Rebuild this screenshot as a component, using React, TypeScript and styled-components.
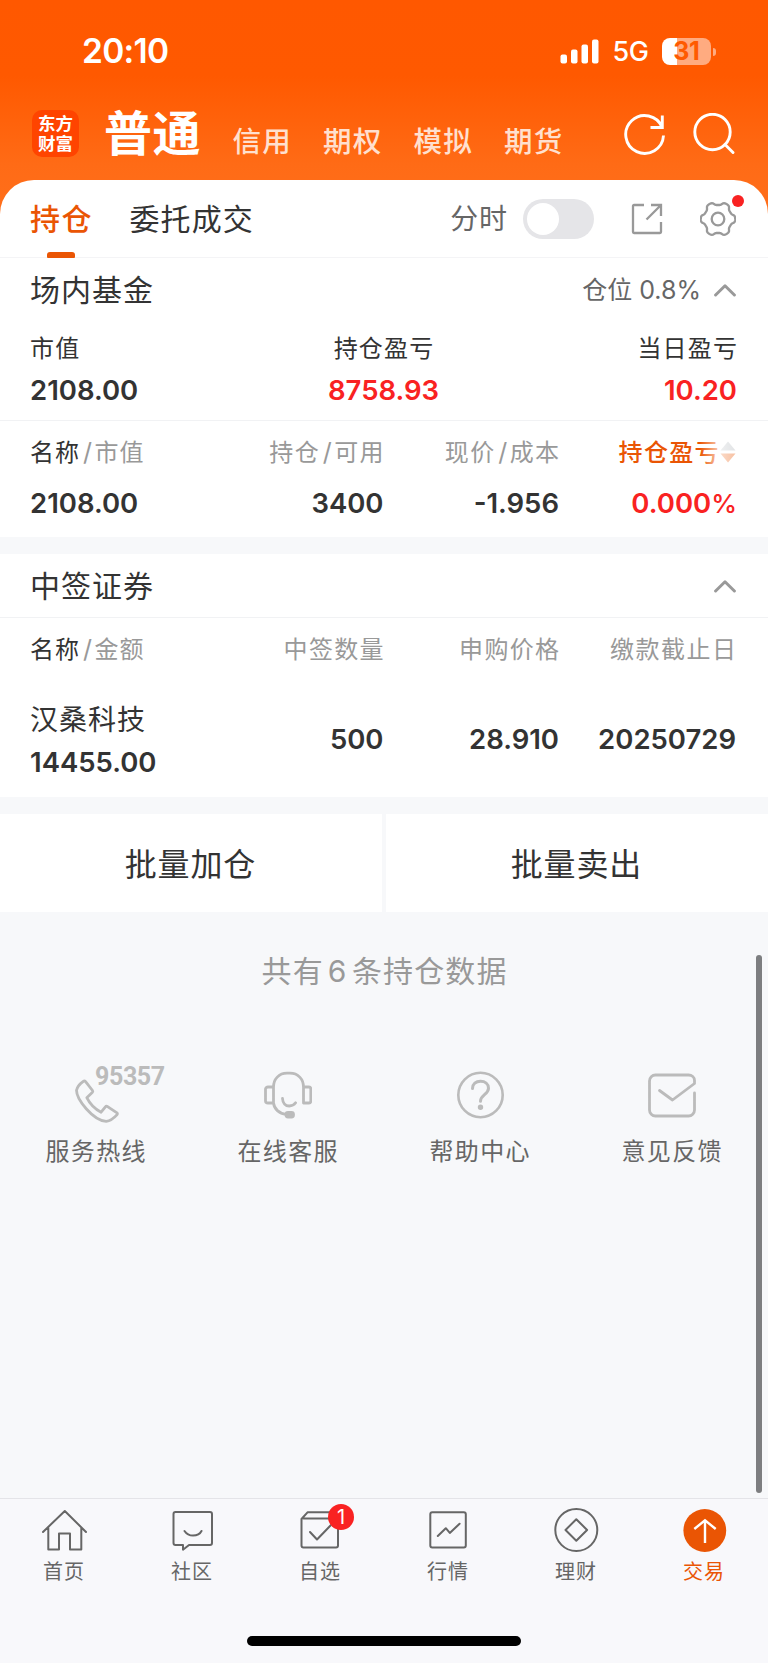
import React from "react";
import styled, { createGlobalStyle } from "styled-components";

const ORANGE = "#ea5504";
const RED = "#f92222";
const INK = "#333333";
const MUTED = "#999999";
const DIM = "#666666";

const GlobalStyle = createGlobalStyle`
  * { box-sizing: border-box; }
  body {
    margin: 0;
    background: #f7f8fa;
    font-family: Inter, "Noto Sans CJK SC", sans-serif;
    color: ${INK};
  }
`;

const Screen = styled.div`
  width: 768px;
  height: 1663px;
  display: flex;
  flex-direction: column;
  overflow: hidden;
  background: #f7f8fa;
`;

interface TextProps {
  $size: number;
  $color?: string;
  $weight?: number;
  $gap?: number;
}

const Text = styled.span<TextProps>`
  display: block;
  padding-top: 2px;
  font-size: ${(p) => p.$size}px;
  line-height: 1.25;
  font-weight: ${(p) => p.$weight ?? 400};
  color: ${(p) => p.$color ?? "inherit"};
  letter-spacing: ${(p) => p.$gap ?? 0}px;
  margin-right: ${(p) => -(p.$gap ?? 0)}px;
  white-space: nowrap;
`;

const Amount = styled(Text).attrs({ $size: 27.5, $weight: 600 })`
  padding-top: 0;
  letter-spacing: 0;
  margin-right: 0;
`;

const Percent = styled.span`
  font-size: 26px;
  font-weight: 500;
  letter-spacing: -1px;
`;

const Hero = styled.header`
  height: 216px;
  margin-bottom: -36px;
  flex: none;
  background: linear-gradient(#ff5800 0, #ff5900 76px, #ff6b16 165px, #ff6f1b 216px);
  color: #fff;
`;

const StatusBar = styled.div`
  height: 102px;
  padding: 0 52px 0 82px;
  display: flex;
  align-items: center;
  justify-content: space-between;
`;

const StatusIcons = styled.div`
  display: flex;
  align-items: center;
  gap: 13px;
`;

const Battery = styled.div`
  position: relative;
  width: 49px;
  height: 27px;
  margin-right: 5px;
  border-radius: 8px;
  display: flex;
  align-items: center;
  justify-content: center;
  background: linear-gradient(90deg, #fff 15px, #ffab80 15px);
  &::after {
    content: "";
    position: absolute;
    right: -5px;
    top: 10px;
    width: 3px;
    height: 8px;
    border-radius: 0 3px 3px 0;
    background: #ffab80;
  }
`;

const AccountNav = styled.nav`
  height: 78px;
  padding: 0 33px 14px 32px;
  display: flex;
  align-items: center;
`;

const Logo = styled.div`
  width: 47px;
  height: 47px;
  margin-bottom: 1px;
  border-radius: 10px;
  background: #ff4400;
  display: flex;
  flex-direction: column;
  align-items: center;
  justify-content: center;
  font-size: 17.5px;
  line-height: 19.5px;
  font-weight: 700;
`;

const ActiveAccount = styled(Text)`
  margin-left: 25px;
  padding-top: 0;
`;

const AccountLinks = styled.div`
  display: flex;
  gap: 32.2px;
  padding-top: 13px;
  margin-left: 32px;
  flex: 1;
`;

const NavActions = styled.div`
  display: flex;
  gap: 27px;
`;

const Panel = styled.section`
  flex: none;
  background: #fff;
`;

const HoldingsPanel = styled(Panel)`
  height: 357px;
  border-radius: 34px 34px 0 0;
`;

const TabsRow = styled.div`
  height: 78px;
  padding: 0 32px 0 30px;
  display: flex;
  align-items: center;
  border-bottom: 1px solid #f4f4f6;
`;

const Tab = styled.div<{ $active?: boolean }>`
  position: relative;
  height: 78px;
  margin-right: 38px;
  display: flex;
  align-items: center;
  color: ${(p) => (p.$active ? ORANGE : INK)};
  &::after {
    content: "";
    display: ${(p) => (p.$active ? "block" : "none")};
    position: absolute;
    left: 17px;
    bottom: 0;
    width: 28px;
    height: 6px;
    border-radius: 3px 3px 1px 1px;
    background: ${ORANGE};
  }
`;

const TabTools = styled.div`
  margin-left: auto;
  display: flex;
  align-items: center;
`;

const Switch = styled.div`
  width: 71px;
  height: 40px;
  margin: 0 37px 0 16px;
  padding: 4px;
  border-radius: 20px;
  background: #e5e5e8;
  &::before {
    content: "";
    display: block;
    width: 32px;
    height: 32px;
    border-radius: 50%;
    background: #fff;
  }
`;

const GearButton = styled.div`
  position: relative;
  margin-left: 37px;
  display: flex;
  &::after {
    content: "";
    position: absolute;
    left: 32px;
    top: -6px;
    width: 12px;
    height: 12px;
    border-radius: 50%;
    background: ${RED};
  }
`;

const SectionHead = styled.div<{ $height: number; $ruled?: boolean }>`
  height: ${(p) => p.$height}px;
  padding: 0 32px 0 30px;
  display: flex;
  align-items: center;
  justify-content: space-between;
  border-bottom: ${(p) => (p.$ruled ? "1px solid #f1f2f4" : "none")};
`;

const HeadAside = styled.div`
  display: flex;
  align-items: center;
  gap: 13px;
`;

const Metrics = styled.div`
  height: 99px;
  padding: 6px 31px 0 30px;
  display: grid;
  grid-template-columns: 1fr 1fr 1fr;
  border-bottom: 1px solid #f1f2f4;
`;

const Metric = styled.div<{ $align: string }>`
  display: flex;
  flex-direction: column;
  align-items: ${(p) => p.$align};
  & > * {
    padding-top: 0;
    line-height: 42px;
  }
  & > :last-child {
    line-height: 40px;
  }
`;

const TableRow = styled.div<{ $height: number }>`
  height: ${(p) => p.$height}px;
  padding: 0 32px 0 30px;
  display: grid;
  grid-template-columns: 178px 175.5px 175.5px 177px;
  align-items: center;
`;

const Cell = styled.div`
  position: relative;
  display: flex;
  align-items: center;
  justify-content: flex-end;
  &:first-child {
    justify-content: flex-start;
  }
`;

const Slash = styled(Text).attrs({ $size: 25, $color: MUTED })`
  margin: 0 2.5px 0 4px;
`;

const SortLabel = styled.div`
  position: relative;
  display: flex;
  align-items: center;
  gap: 1.5px;
  &::after {
    content: "";
    position: absolute;
    right: 0;
    top: 0;
    width: 36px;
    height: 100%;
    background: linear-gradient(90deg, rgba(255, 255, 255, 0), rgba(255, 255, 255, 0.72) 55%, rgba(255, 255, 255, 0.5));
  }
`;

const Stock = styled.div`
  display: flex;
  flex-direction: column;
  padding-top: 4px;
  & > * {
    padding-top: 0;
    line-height: 42px;
  }
`;

const AllotmentPanel = styled(Panel)`
  margin-top: 17px;
  height: 243px;
`;

const BatchActions = styled.div`
  flex: none;
  margin-top: 17px;
  height: 98px;
  display: flex;
  gap: 4px;
`;

const BatchButton = styled.div`
  flex: 1;
  background: #fff;
  display: flex;
  align-items: center;
  justify-content: center;
  padding: 1px 2px 0 0;
`;

const Rest = styled.main`
  position: relative;
  flex: 1;
  padding-top: 39px;
  display: flex;
  flex-direction: column;
  align-items: center;
`;

const Count = styled.span`
  margin: 0 4.5px 0 4px;
`;

const Scrollbar = styled.div`
  position: absolute;
  right: 6px;
  top: 43px;
  width: 6px;
  height: 538px;
  border-radius: 3px;
  background: #7d7e80;
`;

const HelpRow = styled.div`
  width: 100%;
  margin-top: 76px;
  padding-right: 1px;
  display: grid;
  grid-template-columns: repeat(4, 192px);
`;

const HelpItem = styled.div`
  position: relative;
  display: flex;
  flex-direction: column;
  align-items: center;
  gap: 12px;
  padding-right: 1px;
`;

const HotlineNumber = styled.span`
  position: absolute;
  left: 95px;
  top: -4px;
  font: 700 25px/28px Roboto, sans-serif;
  letter-spacing: -0.4px;
  color: #bbb;
`;

const BottomBar = styled.footer`
  flex: none;
  height: 165px;
  border-top: 1px solid #e4e4e8;
  background: #f8f8fb;
  display: flex;
  flex-direction: column;
  align-items: center;
  justify-content: space-between;
  padding-bottom: 17px;
`;

const BottomTabs = styled.nav`
  width: 100%;
  display: grid;
  grid-template-columns: repeat(6, 1fr);
`;

const BottomTab = styled.div`
  position: relative;
  display: flex;
  flex-direction: column;
  align-items: center;
  padding: 8px 1px 0 0;
  gap: 3px;
`;

const Badge = styled.span`
  position: absolute;
  left: 72px;
  top: 5px;
  width: 26px;
  height: 26px;
  border-radius: 50%;
  background: ${RED};
  color: #fff;
  font-size: 20px;
  line-height: 26px;
  text-align: center;
`;

const HomeIndicator = styled.div`
  width: 274px;
  height: 10px;
  border-radius: 5px;
  background: #000;
`;

interface IconProps {
  w: number;
  h: number;
  color?: string;
  stroke?: number;
  children: React.ReactNode;
}

const Icon = ({ w, h, color = DIM, stroke = 2, children }: IconProps) => (
  <svg
    width={w}
    height={h}
    viewBox={`0 0 ${w} ${h}`}
    fill="none"
    stroke={color}
    strokeWidth={stroke}
    strokeLinejoin="round"
    strokeLinecap="round"
  >
    {children}
  </svg>
);

/* Six-lobed outline of the settings gear, centred on (18, 18). */
const gearPath = (() => {
  const pts: string[] = [];
  for (let d = 0; d < 360; d += 3) {
    const t = (d * Math.PI) / 180;
    const r = 15.6 + (1.6 * Math.tanh(1.8 * Math.cos(6 * t))) / Math.tanh(1.8);
    pts.push(`${(18 + r * Math.cos(t)).toFixed(2)} ${(18 + r * Math.sin(t)).toFixed(2)}`);
  }
  return `M${pts.join("L")}Z`;
})();

const ChevronUp = () => (
  <Icon w={22} h={14} color={MUTED} stroke={3}>
    <path d="M1.600 12 11 2.800l9.400 9.200" />
  </Icon>
);

const accounts = ["信用", "期权", "模拟", "期货"];

const helpItems = [
  {
    label: "服务热线",
    number: "95357",
    icon: (
      <Icon w={48} h={56} color="#bbb" stroke={2.8}>
        <path d="M11.300 14.300c-3.400 2.400-6.100 5.500-6.800 9 0 9.200 16.600 30.400 29.700 31.100 3.500-.4 8.100-3.700 10.900-6.800.5-.8.3-1.400-.5-2l-9-5.900c-.9-.6-1.600-.5-2.200.2l-4.300 5.300C24 42.700 18 37.200 14.800 30.700l5.400-5.100c.7-.7.8-1.300.3-2.100l-6.900-8.800c-.7-.8-1.400-1-2.300-.4z" />
      </Icon>
    ),
  },
  {
    label: "在线客服",
    icon: (
      <Icon w={48} h={56} color="#bbb" stroke={2.8}>
        <path d="M9.500 36V20C9.500 12 15 6.200 23 6.200h3c8 0 13.500 5.800 13.500 13.800v16H45c1 0 1.800-1 1.800-2V22c0-1.200-.8-2-1.800-2h-5.500M9.500 20H4c-1.400 0-2.500.8-2.500 2v12c0 1.200 1.100 2 2.500 2h5.500c.8 6 5.500 10.600 12.500 11.300M18.500 31.500c.2 4.500 3 7.500 6.700 7.500 2.800 0 5-1.200 6.400-3.200" />
        <rect x="22" y="45.500" width="7.500" height="4.500" rx="2" fill="#bbb" />
      </Icon>
    ),
  },
  {
    label: "帮助中心",
    icon: (
      <Icon w={48} h={56} color="#bbb" stroke={2.6}>
        <circle cx="24.500" cy="28" r="22.200" />
        <path d="M16.500 21.500c0-4.600 3.400-7.300 8-7.300 4.500 0 8 2.600 8 7 0 6.200-8 6.800-8 13" strokeWidth="3" />
        <circle cx="24.500" cy="40.200" r="1.400" fill="#bbb" />
      </Icon>
    ),
  },
  {
    label: "意见反馈",
    icon: (
      <Icon w={48} h={56} color="#bbb" stroke={2.8}>
        <path d="M46.500 26v17c0 3.300-2.700 6-6 6h-33c-3.300 0-6-2.700-6-6V14c0-3.300 2.700-6 6-6h33c3.300 0 6 2.300 6 5.500v3L24.500 33 11.500 23.500" />
      </Icon>
    ),
  },
];

const bottomTabs = [
  {
    label: "首页",
    icon: (
      <Icon w={48} h={48}>
        <path d="M3 25 24.800 4 46 25M8.300 21v21.500h10.700V26.500h11v16h11.300V21" />
      </Icon>
    ),
  },
  {
    label: "社区",
    icon: (
      <Icon w={48} h={48}>
        <path d="M7.500 5h34.500c1.200 0 2 .8 2 2v29c0 1.200-.8 2-2 2H21l-6 4.700V38H7.500c-1.200 0-2-.8-2-2V7c0-1.200.8-2 2-2zM16.500 24c2 3 5 4.600 8.500 4.600S32 27 33.500 24" />
      </Icon>
    ),
  },
  {
    label: "自选",
    badge: "1",
    icon: (
      <Icon w={48} h={48}>
        <path d="M7.500 11.500H40.500c1 0 1.500.8 1.500 1.500v25.500c0 1.200-.8 2-2 2H7.500c-1.200 0-2-.8-2-2V12L11.500 5.300H40l2 6.200M14 25l7 7.500 14-14.500" />
      </Icon>
    ),
  },
  {
    label: "行情",
    icon: (
      <Icon w={48} h={48}>
        <rect x="6.300" y="5.300" width="35.500" height="35.300" rx="2" />
        <path d="m13.800 29 8-7.800 4 4.700 9.800-9.200" />
      </Icon>
    ),
  },
  {
    label: "理财",
    icon: (
      <Icon w={48} h={48}>
        <circle cx="24.300" cy="23" r="21" />
        <path d="M24.300 12.200 35.100 23 24.300 33.800 13.500 23z" />
      </Icon>
    ),
  },
  {
    label: "交易",
    active: true,
    icon: (
      <Icon w={48} h={48} color="#fff" stroke={2.4}>
        <circle cx="24.800" cy="23.500" r="21.400" fill={ORANGE} stroke="none" />
        <path d="M25 36V13M14.300 22l10.700-8.700L35.700 22" strokeLinecap="butt" strokeLinejoin="miter" />
      </Icon>
    ),
  },
];

export default function App() {
  return (
    <Screen>
      <GlobalStyle />
      <Hero>
        <StatusBar>
          <Text $size={33.5} $weight={600} $gap={-0.7}>20:10</Text>
          <StatusIcons>
            <Icon w={39} h={25} color="none">
              <g fill="#fff">
                <rect x="0.500" y="15.500" width="6.500" height="9" rx="2" />
                <rect x="11" y="10.500" width="6.500" height="14" rx="2" />
                <rect x="21.500" y="5.500" width="6.500" height="19" rx="2" />
                <rect x="32" y="0.500" width="6.500" height="24" rx="2" />
              </g>
            </Icon>
            <Text $size={27} $weight={500} $gap={-0.3}>5G</Text>
            <Battery>
              <Text $size={25} $weight={700} $color="#ff5a00" $gap={-0.6}>31</Text>
            </Battery>
          </StatusIcons>
        </StatusBar>
        <AccountNav>
          <Logo>
            <span>东方</span>
            <span>财富</span>
          </Logo>
          <ActiveAccount $size={48} $weight={700} $gap={0.5}>普通</ActiveAccount>
          <AccountLinks>
            {accounts.map((a) => (
              <Text key={a} $size={28.5} $weight={500} $gap={1.3} $color="#ffe0cf">{a}</Text>
            ))}
          </AccountLinks>
          <NavActions>
            <Icon w={42} h={42} color="#fff" stroke={2.9}>
              <path d="M39.500 22.500A18.900 18.900 0 1 1 38.200 14.500M38.300 2.500v12H26.500" strokeLinecap="butt" strokeLinejoin="miter" />
            </Icon>
            <Icon w={42} h={42} color="#fff" stroke={2.900}>
              <circle cx="19.500" cy="19" r="17.700" />
              <path d="m32 31.500 8 8" />
            </Icon>
          </NavActions>
        </AccountNav>
      </Hero>

      <HoldingsPanel>
        <TabsRow>
          <Tab $active>
            <Text $size={30} $weight={500} $gap={1.5}>持仓</Text>
          </Tab>
          <Tab>
            <Text $size={30} $gap={1.1}>委托成交</Text>
          </Tab>
          <TabTools>
            <Text $size={28} $color={DIM} $gap={0.8}>分时</Text>
            <Switch />
            <Icon w={32} h={32} color={MUTED} stroke={2.3}>
              <path d="M13 2H3c-.6 0-1 .4-1 1v26c0 .6.4 1 1 1h26c.6 0 1-.4 1-1V19M20 2h10v11M30 2 15.500 16.500" strokeLinecap="butt" strokeLinejoin="miter" />
            </Icon>
            <GearButton>
              <Icon w={36} h={36} color={MUTED} stroke={2.3}>
                <path d={gearPath} />
                <circle cx="18" cy="18" r="6.300" />
              </Icon>
            </GearButton>
          </TabTools>
        </TabsRow>

        <SectionHead $height={64}>
          <Text $size={30} $gap={1}>场内基金</Text>
          <HeadAside>
            <Text $size={25} $color={DIM}>仓位 0.8%</Text>
            <ChevronUp />
          </HeadAside>
        </SectionHead>

        <Metrics>
          <Metric $align="flex-start">
            <Text $size={24} $gap={1.2}>市值</Text>
            <Amount>2108.00</Amount>
          </Metric>
          <Metric $align="center">
            <Text $size={24} $gap={1.2}>持仓盈亏</Text>
            <Amount $color={RED}>8758.93</Amount>
          </Metric>
          <Metric $align="flex-end">
            <Text $size={24} $gap={1.2}>当日盈亏</Text>
            <Amount $color={RED}>10.20</Amount>
          </Metric>
        </Metrics>

        <TableRow $height={62}>
          <Cell>
            <Text $size={24} $gap={1}>名称</Text>
            <Slash>/</Slash>
            <Text $size={24} $gap={1} $color={MUTED}>市值</Text>
          </Cell>
          <Cell>
            <Text $size={24} $gap={1.3} $color={MUTED}>持仓</Text>
            <Slash>/</Slash>
            <Text $size={24} $gap={1.3} $color={MUTED}>可用</Text>
          </Cell>
          <Cell>
            <Text $size={24} $gap={1.3} $color={MUTED}>现价</Text>
            <Slash>/</Slash>
            <Text $size={24} $gap={1.3} $color={MUTED}>成本</Text>
          </Cell>
          <Cell>
            <SortLabel>
              <Text $size={24} $gap={1.3} $weight={500} $color={ORANGE}>持仓盈亏</Text>
              <Icon w={16} h={22} color="none">
                <path d="M8 .5 15.500 9.500H.5z" fill="#c4c8cc" />
                <path d="M8 21.500 15.500 12.500H.5z" fill="#f08040" />
              </Icon>
            </SortLabel>
          </Cell>
        </TableRow>
        <TableRow $height={40}>
          <Cell><Amount>2108.00</Amount></Cell>
          <Cell><Amount>3400</Amount></Cell>
          <Cell><Amount>-1.956</Amount></Cell>
          <Cell><Amount $color={RED}>0.000<Percent>%</Percent></Amount></Cell>
        </TableRow>
      </HoldingsPanel>

      <AllotmentPanel>
        <SectionHead $height={64} $ruled>
          <Text $size={30} $gap={1}>中签证券</Text>
          <ChevronUp />
        </SectionHead>
        <TableRow $height={62}>
          <Cell>
            <Text $size={24} $gap={1}>名称</Text>
            <Slash>/</Slash>
            <Text $size={24} $gap={1} $color={MUTED}>金额</Text>
          </Cell>
          <Cell><Text $size={24} $gap={1.3} $color={MUTED}>中签数量</Text></Cell>
          <Cell><Text $size={24} $gap={1.3} $color={MUTED}>申购价格</Text></Cell>
          <Cell><Text $size={24} $gap={1.5} $color={MUTED}>缴款截止日</Text></Cell>
        </TableRow>
        <TableRow $height={118}>
          <Cell>
            <Stock>
              <Text $size={28} $gap={1}>汉桑科技</Text>
              <Amount>14455.00</Amount>
            </Stock>
          </Cell>
          <Cell><Amount>500</Amount></Cell>
          <Cell><Amount>28.910</Amount></Cell>
          <Cell><Amount>20250729</Amount></Cell>
        </TableRow>
      </AllotmentPanel>

      <BatchActions>
        <BatchButton><Text $size={32} $gap={0.9}>批量加仓</Text></BatchButton>
        <BatchButton><Text $size={32} $gap={0.9}>批量卖出</Text></BatchButton>
      </BatchActions>

      <Rest>
        <Text $size={30} $gap={1.1} $color={MUTED}>共有<Count>6</Count>条持仓数据</Text>
        <HelpRow>
          {helpItems.map((item) => (
            <HelpItem key={item.label}>
              {item.icon}
              {item.number && <HotlineNumber>{item.number}</HotlineNumber>}
              <Text $size={24} $gap={1.3} $color={DIM}>{item.label}</Text>
            </HelpItem>
          ))}
        </HelpRow>
        <Scrollbar />
      </Rest>

      <BottomBar>
        <BottomTabs>
          {bottomTabs.map((tab) => (
            <BottomTab key={tab.label}>
              {tab.icon}
              {tab.badge && <Badge>{tab.badge}</Badge>}
              <Text $size={20} $gap={1} $color={tab.active ? ORANGE : DIM}>{tab.label}</Text>
            </BottomTab>
          ))}
        </BottomTabs>
        <HomeIndicator />
      </BottomBar>
    </Screen>
  );
}
